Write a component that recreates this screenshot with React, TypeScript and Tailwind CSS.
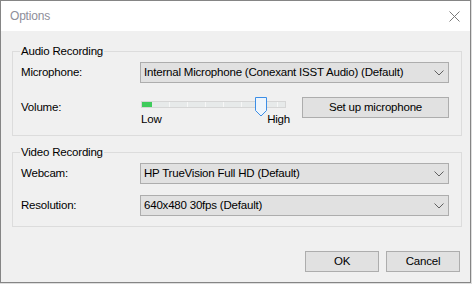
import React from "react";

const Chevron = () => (
  <svg width="10" height="6" viewBox="0 0 10 6" className="shrink-0">
    <path d="M0.5 0.5 L5 5 L9.5 0.5" fill="none" stroke="#606060" strokeWidth="1" />
  </svg>
);

function Combo({ text }: { text: string }) {
  return (
    <div className="flex h-[21px] w-[309px] items-center justify-between border border-[#adadad] bg-[#e1e1e1] pl-[3px] pr-[4px]">
      <span className="leading-none">{text}</span>
      <Chevron />
    </div>
  );
}

function Slider() {
  return (
    <div className="relative flex w-[148px] flex-col pt-[4px]">
      <div className="ml-[1px] flex h-[7px] w-[145px] items-stretch border border-[#d6d6d6] bg-[#e7eaea]">
        <div className="w-[10px] bg-[#3fcb5c]" />
        {[0, 1, 2, 3, 4, 5, 6].map((i) => (
          <div key={i} className="ml-[17px] w-[1px] bg-[#f7f7f7]" />
        ))}
      </div>
      <div className="mt-[6px] flex justify-between pl-[1px] leading-none">
        <span>Low</span>
        <span className="-mr-[2px]">High</span>
      </div>
      <svg
        width="12"
        height="20"
        viewBox="0 0 12 20"
        className="absolute left-[115px] top-[0px]"
      >
        <path
          d="M0.5 0.5 H11.5 V13.5 L6 19 L0.5 13.5 Z"
          fill="#eef5fc"
          stroke="#3c8ee6"
          strokeWidth="1"
        />
      </svg>
    </div>
  );
}

function Group({
  title,
  children,
  className,
}: {
  title: string;
  children: React.ReactNode;
  className: string;
}) {
  return (
    <div className={`relative border border-[#dcdcdc] pl-[8px] pr-[12px] ${className}`}>
      <span className="absolute left-[7px] top-[-9px] bg-[#f0f0f0] px-[1px] leading-[16px]">
        {title}
      </span>
      {children}
    </div>
  );
}

export default function App() {
  return (
    <div className="h-[284px] w-[472px] bg-[#dedede] font-['Liberation_Sans',_sans-serif] text-[11.5px] tracking-[-0.2px] text-black">
      <div className="flex h-[283px] w-[471px] flex-col border border-[#858585] bg-[#f0f0f0]">
        <div className="flex h-[30px] shrink-0 items-center justify-between bg-white pl-[9px] pr-[9px]">
          <span className="text-[12px] text-[#8e8e9a]">Options</span>
          <svg width="11" height="11" viewBox="0 0 11 11" className="mr-[1px]">
            <path d="M0.5 0.5 L10.5 10.5 M10.5 0.5 L0.5 10.5" stroke="#7a7a7a" strokeWidth="1" />
          </svg>
        </div>
        <div className="flex flex-1 flex-col pl-[11px] pr-[8px]">
          <Group title="Audio Recording" className="mt-[20px] h-[85px] pt-[10px]">
            <div className="flex h-[21px] items-center">
              <span className="w-[119px]">Microphone:</span>
              <Combo text="Internal Microphone (Conexant ISST Audio) (Default)" />
            </div>
            <div className="mt-[14px] flex items-start">
              <span className="flex h-[21px] w-[119px] items-center">Volume:</span>
              <Slider />
              <button className="ml-[14px] h-[21px] w-[147px] border border-[#adadad] bg-[#e1e1e1] leading-none">
                Set up microphone
              </button>
            </div>
          </Group>
          <Group title="Video Recording" className="mt-[16px] h-[75px] pt-[10px]">
            <div className="flex h-[21px] items-center">
              <span className="w-[119px]">Webcam:</span>
              <Combo text="HP TrueVision Full HD (Default)" />
            </div>
            <div className="mt-[11px] flex h-[21px] items-center">
              <span className="w-[119px]">Resolution:</span>
              <Combo text="640x480 30fps (Default)" />
            </div>
          </Group>
          <div className="mt-[24px] flex justify-end gap-[7px] pr-[2px]">
            <button className="h-[21px] w-[74px] border border-[#adadad] bg-[#e1e1e1] leading-none">
              OK
            </button>
            <button className="h-[21px] w-[74px] border border-[#adadad] bg-[#e1e1e1] leading-none">
              Cancel
            </button>
          </div>
        </div>
      </div>
    </div>
  );
}
